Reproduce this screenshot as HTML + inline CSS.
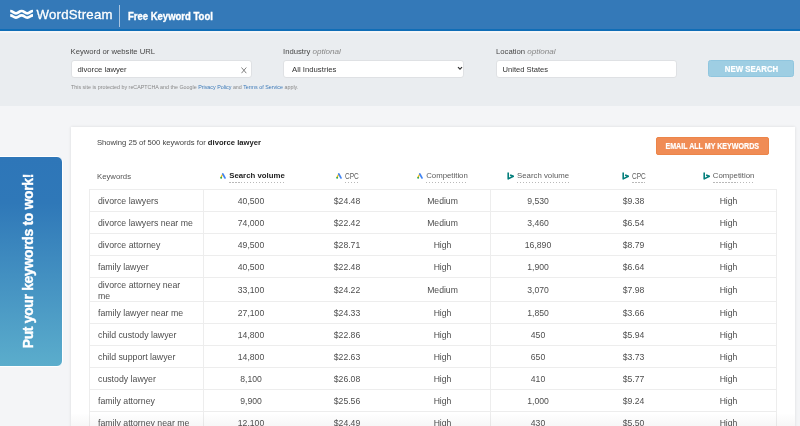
<!DOCTYPE html>
<html><head><meta charset="utf-8">
<style>
*{margin:0;padding:0;box-sizing:border-box}
html,body{width:800px;height:426px;overflow:hidden}
.aa{position:absolute;left:0;top:0;width:800px;height:426px;overflow:hidden;will-change:transform}
body{font-family:"Liberation Sans",sans-serif;background:#f4f5f7;position:relative;color:#444}
.abs{position:absolute}
#hdr{left:0;top:0;width:800px;height:31px;background:#3479b8;border-bottom:2px solid #106db6}
#hdrline{left:0;top:31px;width:800px;height:2px;background:#f4f5f7}
#form{left:0;top:31px;width:800px;height:74.5px;background:#eaedf0}
.lbl{font-size:7.7px;color:#484848;white-space:nowrap}
.lbl i{color:#888;font-size:8.1px}
.inp{background:#fff;border:1px solid #dfe1e4;border-radius:3px;height:18px}
.inptxt{font-size:8px;color:#333;white-space:nowrap}
#tab{left:-2px;top:156px;width:65px;height:211px;border-radius:0 6px 6px 0;background:linear-gradient(#2e76b8 0%,#2f78b8 22%,#5badcc 100%);border:1px solid #fff}
#tabtxt{left:0;top:0;width:209px;height:64px;transform-origin:0 0;transform:translate(14.5px,348.3px) rotate(-90deg);color:#fff;font-weight:bold;font-size:13.9px;letter-spacing:-0.3px;-webkit-text-stroke:0.35px #fff;white-space:nowrap;line-height:13px;padding-top:7px;text-align:left}
#panel{left:71px;top:127px;width:724px;height:320px;background:#fff;box-shadow:0 0 3px rgba(0,0,0,.11)}
.t{white-space:nowrap;font-size:8.7px;color:#444}
.hl{position:absolute;height:1px;background:#e9eaec}
.vl{position:absolute;width:1px;background:#e9eaec}
.c{position:absolute;text-align:center;white-space:nowrap;font-size:8.8px;color:#444}

</style></head><body><div class="aa">
<div id="hdr" class="abs"></div>
<div id="form" class="abs"></div>
<div id="hdrline" class="abs"></div>
<!-- logo -->
<svg class="abs" style="left:9.5px;top:7.7px" width="24" height="12" viewBox="0 0 24 12">
<path d="M0.2 3 C3 3 3.3 5.3 6 5.3 C8.7 5.3 8.9 3 11.6 3 C14.3 3 14.6 5.3 17.3 5.3 C20 5.3 20.2 3 23 3" fill="none" stroke="#fff" stroke-width="2.7"/>
<path d="M0.2 7.4 C3 7.4 3.3 9.6 6 9.6 C8.7 9.6 8.9 7.4 11.6 7.4 C14.3 7.4 14.6 9.6 17.3 9.6 C20 9.6 20.2 7.4 23 7.4" fill="none" stroke="#fff" stroke-width="2.7"/>
</svg>
<div class="abs" style="left:36.5px;top:6.5px;font-size:13.2px;letter-spacing:0.25px;color:#fff;white-space:nowrap;line-height:16px;-webkit-text-stroke:0.3px #fff">WordStream</div>
<div class="abs" style="left:119px;top:5px;width:1px;height:22px;background:#a9c5e1"></div>
<div class="abs" style="left:127.6px;top:9px;font-size:10.8px;font-weight:bold;color:#fff;white-space:nowrap;line-height:14px;transform:scaleX(0.88);transform-origin:0 0;-webkit-text-stroke:0.35px #fff">Free Keyword Tool</div>

<!-- form -->
<div class="abs lbl" style="left:70.5px;top:47px">Keyword or website URL</div>
<div class="abs inp" style="left:71px;top:59.5px;width:181px"></div>
<div class="abs inptxt" style="left:77.5px;top:64.6px;font-size:7.7px">divorce lawyer</div>
<svg class="abs" style="left:240.5px;top:66.5px" width="6" height="7" viewBox="0 0 6 7"><path d="M0.5 0.5 L5.3 6.2 M5.3 0.5 L0.5 6.2" stroke="#6a6a6a" stroke-width="0.85"/></svg>
<div class="abs" style="left:71px;top:83.5px;font-size:5.35px;color:#888;white-space:nowrap">This site is protected by reCAPTCHA and the Google <span style="color:#3b79b8">Privacy Policy</span> and <span style="color:#3b79b8">Terms of Service</span> apply.</div>

<div class="abs lbl" style="left:283px;top:47px">Industry <i>optional</i></div>
<div class="abs inp" style="left:283px;top:59.5px;width:181px"></div>
<div class="abs inptxt" style="left:292px;top:64.6px;font-size:7.75px">All Industries</div>
<svg class="abs" style="left:456.5px;top:66.2px" width="6" height="5" viewBox="0 0 6 5"><path d="M1 1.2 L3 3.2 L5 1.2" fill="none" stroke="#333" stroke-width="1.2"/></svg>

<div class="abs lbl" style="left:496px;top:47px">Location <i>optional</i></div>
<div class="abs inp" style="left:495.5px;top:59.5px;width:181px"></div>
<div class="abs inptxt" style="left:502.5px;top:64.6px;font-size:7.6px">United States</div>

<div class="abs" style="left:708px;top:59.8px;width:86.3px;height:17.5px;background:#9ecee3;border:1px solid #90c6df;border-radius:2.5px"></div><div class="abs" style="left:708px;top:60.4px;width:87px;height:18px;color:#fff;font-weight:bold;font-size:8.6px;text-align:center;line-height:18px;transform:scaleX(0.91);-webkit-text-stroke:0.2px #fff">NEW SEARCH</div>

<!-- tab -->
<div id="tab" class="abs"></div>
<div id="tabtxt" class="abs">Put your keywords to work!</div>

<!-- panel -->
<div id="panel" class="abs"></div>
<div class="abs t" style="left:97px;top:138px;font-size:7.65px">Showing 25 of 500 keywords for <b style="color:#222">divorce lawyer</b></div>
<div class="abs" style="left:656px;top:137px;width:112.5px;height:17.5px;background:#f08c55;border:1px solid #ec8549;border-radius:2px"></div><div class="abs" style="left:656px;top:137.8px;width:112.5px;height:17.5px;color:#fff;font-weight:bold;font-size:8.3px;text-align:center;line-height:17.5px;transform:scaleX(0.855);-webkit-text-stroke:0.2px #fff">EMAIL ALL MY KEYWORDS</div>


<style>
.th{position:absolute;font-size:7.75px;color:#555;white-space:nowrap}
.hc{position:absolute;top:170px;height:14px;display:flex;justify-content:center;align-items:center;white-space:nowrap;font-size:7.8px;color:#5c5c5c}
.hc .ic{margin-right:3px;flex:none;position:relative;top:-0.6px;left:0}
.hc .ib{left:0;margin-right:3.2px;top:-1px}
.u{line-height:10px;padding-top:0.6px;padding-bottom:1.9px;background:repeating-linear-gradient(90deg,#b9b9b9 0 1.5px,transparent 1.5px 3px) left bottom/100% 1.4px no-repeat}
.row{position:absolute;left:0;width:800px}
.kw{position:absolute;left:98px;top:1px;height:100%;display:flex;align-items:center;font-size:8.75px;color:#4e4e4e;line-height:11px;width:110px}
.cell{position:absolute;top:0;height:100%;display:flex;align-items:center;justify-content:center;font-size:8.65px;color:#4e4e4e}
.hl{position:absolute;height:1px;background:#ededed}
.vl{position:absolute;width:1px;background:#ededed}
</style>
<div class="th" style="left:97px;top:171.6px">Keywords</div>
<div class="hc" style="left:204.5px;width:96px"><svg class="ic" width="6" height="6" viewBox="0 0 6 6"><path d="M2.6 1.4 L1.2 4.0" stroke="#fbbc04" stroke-width="1.25" stroke-linecap="round"/><circle cx="1.15" cy="4.75" r="1.0" fill="#34a853"/><path d="M2.8 0.95 L4.95 4.95" stroke="#4285f4" stroke-width="1.75" stroke-linecap="round"/></svg><span class="u" style="font-weight:bold;color:#222">Search volume</span></div>
<div class="hc" style="left:299px;width:96px"><svg class="ic" width="6" height="6" viewBox="0 0 6 6"><path d="M2.6 1.4 L1.2 4.0" stroke="#fbbc04" stroke-width="1.25" stroke-linecap="round"/><circle cx="1.15" cy="4.75" r="1.0" fill="#34a853"/><path d="M2.8 0.95 L4.95 4.95" stroke="#4285f4" stroke-width="1.75" stroke-linecap="round"/></svg><span class="u" style="width:13.6px;overflow:visible"><span style="display:inline-block;transform:scaleX(0.8);transform-origin:0 0;font-size:8.2px;position:relative;top:0.9px">CPC</span></span></div>
<div class="hc" style="left:395px;width:95px"><svg class="ic" width="6" height="6" viewBox="0 0 6 6"><path d="M2.6 1.4 L1.2 4.0" stroke="#fbbc04" stroke-width="1.25" stroke-linecap="round"/><circle cx="1.15" cy="4.75" r="1.0" fill="#34a853"/><path d="M2.8 0.95 L4.95 4.95" stroke="#4285f4" stroke-width="1.75" stroke-linecap="round"/></svg><span class="u">Competition</span></div>
<div class="hc" style="left:490px;width:96px"><svg class="ic ib" width="7" height="8" viewBox="0 0 7 8"><path d="M1.2 0.5 V6.9 L6.4 4.3 L3.1 2.9" fill="none" stroke="#037e7b" stroke-width="1.6" stroke-linejoin="round"/></svg><span class="u">Search volume</span></div>
<div class="hc" style="left:586px;width:95px"><svg class="ic ib" width="7" height="8" viewBox="0 0 7 8"><path d="M1.2 0.5 V6.9 L6.4 4.3 L3.1 2.9" fill="none" stroke="#037e7b" stroke-width="1.6" stroke-linejoin="round"/></svg><span class="u" style="width:13.6px;overflow:visible"><span style="display:inline-block;transform:scaleX(0.8);transform-origin:0 0;font-size:8.2px;position:relative;top:0.9px">CPC</span></span></div>
<div class="hc" style="left:681px;width:95px"><svg class="ic ib" width="7" height="8" viewBox="0 0 7 8"><path d="M1.2 0.5 V6.9 L6.4 4.3 L3.1 2.9" fill="none" stroke="#037e7b" stroke-width="1.6" stroke-linejoin="round"/></svg><span class="u">Competition</span></div>
<div class="hl" style="left:89px;top:189px;width:688px"></div>
<div class="hl" style="left:89px;top:211px;width:688px"></div>
<div class="hl" style="left:89px;top:233px;width:688px"></div>
<div class="hl" style="left:89px;top:255px;width:688px"></div>
<div class="hl" style="left:89px;top:277px;width:688px"></div>
<div class="hl" style="left:89px;top:301px;width:688px"></div>
<div class="hl" style="left:89px;top:323px;width:688px"></div>
<div class="hl" style="left:89px;top:345px;width:688px"></div>
<div class="hl" style="left:89px;top:367px;width:688px"></div>
<div class="hl" style="left:89px;top:389px;width:688px"></div>
<div class="hl" style="left:89px;top:411px;width:688px"></div>
<div class="hl" style="left:89px;top:433px;width:688px"></div>
<div class="vl" style="left:89px;top:189px;height:240px"></div>
<div class="vl" style="left:203px;top:189px;height:240px"></div>
<div class="vl" style="left:490px;top:189px;height:240px"></div>
<div class="vl" style="left:776px;top:189px;height:240px"></div>
<div class="row" style="top:190px;height:21px">
<div class="kw">divorce lawyers</div>
<div class="cell" style="left:203px;width:96px">40,500</div>
<div class="cell" style="left:299px;width:96px">$24.48</div>
<div class="cell" style="left:395px;width:95px">Medium</div>
<div class="cell" style="left:490px;width:96px">9,530</div>
<div class="cell" style="left:586px;width:95px">$9.38</div>
<div class="cell" style="left:681px;width:95px">High</div>
</div>
<div class="row" style="top:212px;height:21px">
<div class="kw">divorce lawyers near me</div>
<div class="cell" style="left:203px;width:96px">74,000</div>
<div class="cell" style="left:299px;width:96px">$22.42</div>
<div class="cell" style="left:395px;width:95px">Medium</div>
<div class="cell" style="left:490px;width:96px">3,460</div>
<div class="cell" style="left:586px;width:95px">$6.54</div>
<div class="cell" style="left:681px;width:95px">High</div>
</div>
<div class="row" style="top:234px;height:21px">
<div class="kw">divorce attorney</div>
<div class="cell" style="left:203px;width:96px">49,500</div>
<div class="cell" style="left:299px;width:96px">$28.71</div>
<div class="cell" style="left:395px;width:95px">High</div>
<div class="cell" style="left:490px;width:96px">16,890</div>
<div class="cell" style="left:586px;width:95px">$8.79</div>
<div class="cell" style="left:681px;width:95px">High</div>
</div>
<div class="row" style="top:256px;height:21px">
<div class="kw">family lawyer</div>
<div class="cell" style="left:203px;width:96px">40,500</div>
<div class="cell" style="left:299px;width:96px">$22.48</div>
<div class="cell" style="left:395px;width:95px">High</div>
<div class="cell" style="left:490px;width:96px">1,900</div>
<div class="cell" style="left:586px;width:95px">$6.64</div>
<div class="cell" style="left:681px;width:95px">High</div>
</div>
<div class="row" style="top:278px;height:23px">
<div class="kw">divorce attorney near<br>me</div>
<div class="cell" style="left:203px;width:96px">33,100</div>
<div class="cell" style="left:299px;width:96px">$24.22</div>
<div class="cell" style="left:395px;width:95px">Medium</div>
<div class="cell" style="left:490px;width:96px">3,070</div>
<div class="cell" style="left:586px;width:95px">$7.98</div>
<div class="cell" style="left:681px;width:95px">High</div>
</div>
<div class="row" style="top:302px;height:21px">
<div class="kw">family lawyer near me</div>
<div class="cell" style="left:203px;width:96px">27,100</div>
<div class="cell" style="left:299px;width:96px">$24.33</div>
<div class="cell" style="left:395px;width:95px">High</div>
<div class="cell" style="left:490px;width:96px">1,850</div>
<div class="cell" style="left:586px;width:95px">$3.66</div>
<div class="cell" style="left:681px;width:95px">High</div>
</div>
<div class="row" style="top:324px;height:21px">
<div class="kw">child custody lawyer</div>
<div class="cell" style="left:203px;width:96px">14,800</div>
<div class="cell" style="left:299px;width:96px">$22.86</div>
<div class="cell" style="left:395px;width:95px">High</div>
<div class="cell" style="left:490px;width:96px">450</div>
<div class="cell" style="left:586px;width:95px">$5.94</div>
<div class="cell" style="left:681px;width:95px">High</div>
</div>
<div class="row" style="top:346px;height:21px">
<div class="kw">child support lawyer</div>
<div class="cell" style="left:203px;width:96px">14,800</div>
<div class="cell" style="left:299px;width:96px">$22.63</div>
<div class="cell" style="left:395px;width:95px">High</div>
<div class="cell" style="left:490px;width:96px">650</div>
<div class="cell" style="left:586px;width:95px">$3.73</div>
<div class="cell" style="left:681px;width:95px">High</div>
</div>
<div class="row" style="top:368px;height:21px">
<div class="kw">custody lawyer</div>
<div class="cell" style="left:203px;width:96px">8,100</div>
<div class="cell" style="left:299px;width:96px">$26.08</div>
<div class="cell" style="left:395px;width:95px">High</div>
<div class="cell" style="left:490px;width:96px">410</div>
<div class="cell" style="left:586px;width:95px">$5.77</div>
<div class="cell" style="left:681px;width:95px">High</div>
</div>
<div class="row" style="top:390px;height:21px">
<div class="kw">family attorney</div>
<div class="cell" style="left:203px;width:96px">9,900</div>
<div class="cell" style="left:299px;width:96px">$25.56</div>
<div class="cell" style="left:395px;width:95px">High</div>
<div class="cell" style="left:490px;width:96px">1,000</div>
<div class="cell" style="left:586px;width:95px">$9.24</div>
<div class="cell" style="left:681px;width:95px">High</div>
</div>
<div class="row" style="top:412px;height:21px">
<div class="kw">family attorney near me</div>
<div class="cell" style="left:203px;width:96px">12,100</div>
<div class="cell" style="left:299px;width:96px">$24.49</div>
<div class="cell" style="left:395px;width:95px">High</div>
<div class="cell" style="left:490px;width:96px">430</div>
<div class="cell" style="left:586px;width:95px">$5.50</div>
<div class="cell" style="left:681px;width:95px">High</div>
</div>
<div style="position:absolute;left:71px;top:413px;width:724px;height:13px;background:linear-gradient(rgba(60,60,70,0),rgba(60,60,70,.045))"></div>
</div></body></html>
